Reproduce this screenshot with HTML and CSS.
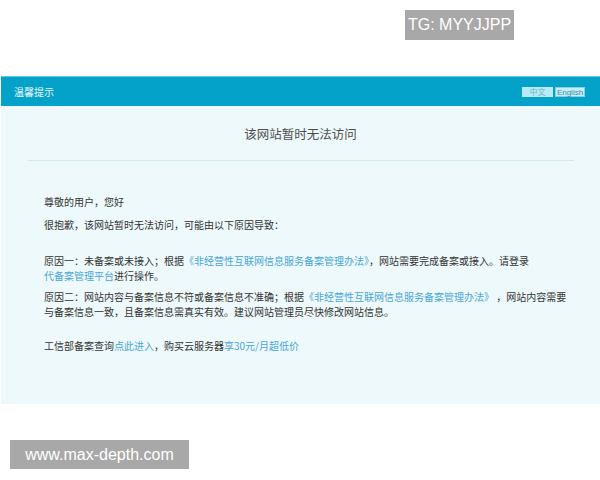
FILE: index.html
```html
<!DOCTYPE html>
<html lang="zh-CN">
<head>
<meta charset="utf-8">
<title>温馨提示</title>
<link rel="stylesheet" href="styles.css">
</head>
<body>
<div class="top">
  <div class="tag tag-tg">TG: MYYJJPP</div>
</div>
<div class="panel">
  <div class="panel-head">
    <span class="head-title">温馨提示</span>
    <div class="langs">
      <span class="lang lang-cn">中文</span>
      <span class="lang lang-en">English</span>
    </div>
  </div>
  <div class="panel-body">
    <h1 class="title">该网站暂时无法访问</h1>
    <div class="divider"></div>
    <div class="content">
      <p class="p1">尊敬的用户，您好</p>
      <p class="p2">很抱歉，该网站暂时无法访问，可能由以下原因导致：</p>
      <p class="p3">原因一：未备案或未接入；根据<a class="link">《非经营性互联网信息服务备案管理办法》</a>，网站需要完成备案或接入。请登录<br><a class="link">代备案管理平台</a>进行操作。</p>
      <p class="p4">原因二：网站内容与备案信息不符或备案信息不准确；根据<a class="link">《非经营性互联网信息服务备案管理办法》</a> ，网站内容需要<br>与备案信息一致，且备案信息需真实有效。建议网站管理员尽快修改网站信息。</p>
      <p class="p5">工信部备案查询<a class="link">点此进入</a>，购买云服务器<a class="link">享30元/月超低价</a></p>
    </div>
  </div>
</div>
<div class="bottom">
  <div class="tag tag-site">www.max-depth.com</div>
</div>
</body>
</html>
```

FILE: styles.css
```css
html, body {
  margin: 0;
  padding: 0;
  background: #ffffff;
  width: 600px;
  height: 480px;
  overflow: hidden;
  font-family: "Noto Sans CJK SC", "Liberation Sans", sans-serif;
}

.top {
  display: flex;
  justify-content: flex-end;
  padding: 10px 86px 0 0;
  height: 30px;
}

.tag {
  background: #a8a8a8;
  color: #ffffff;
  font-family: "Liberation Sans", Arial, sans-serif;
  font-size: 16px;
  display: flex;
  align-items: center;
  justify-content: center;
  height: 30px;
}

.tag-tg {
  width: 109px;
}

.panel {
  margin: 36px 0 0 1px;
}

.panel-head {
  height: 30px;
  background: #04a2c8;
  border-top: 1px solid #5fc9e2;
  box-sizing: border-box;
  display: flex;
  align-items: center;
  justify-content: space-between;
  padding: 0 15px 0 13px;
}

.head-title {
  color: #e8f8fc;
  font-size: 10px;
  line-height: 12px;
  margin-top: 1px;
}

.langs {
  display: flex;
  gap: 2px;
}

.lang {
  height: 10px;
  line-height: 10px;
  font-size: 8px;
  text-align: center;
  box-sizing: border-box;
}

.lang-cn {
  width: 31px;
  background: #b7ebf7;
  color: #6fb4cb;
}

.lang-en {
  width: 30px;
  background: #c7eef8;
  color: #3a8fb2;
  border: 1px solid #89cfe3;
  font-family: "Liberation Sans", Arial, sans-serif;
}

.panel-body {
  background: #eef9fc;
  height: 298px;
  padding-top: 17px;
  box-sizing: border-box;
}

.title {
  margin: 0;
  text-align: center;
  font-size: 12.5px;
  line-height: 22px;
  font-weight: normal;
  color: #4d4d4d;
}

.divider {
  height: 1px;
  background: #d2e9ef;
  margin: 15px 26px 0 27px;
}

.content {
  padding: 33px 0 0 43px;
  font-size: 10px;
  line-height: 15px;
  color: #333333;
}

.content p {
  margin: 0;
}

.p2 {
  margin-top: 8px !important;
}

.p3 {
  margin-top: 21px !important;
}

.p4 {
  margin-top: 6px !important;
}

.p5 {
  margin-top: 19px !important;
}

.link {
  color: #49a6d6;
  text-decoration: none;
}

.bottom {
  padding: 36px 0 0 10px;
}

.tag-site {
  width: 179px;
  height: 29px;
  font-size: 16px;
}
```
